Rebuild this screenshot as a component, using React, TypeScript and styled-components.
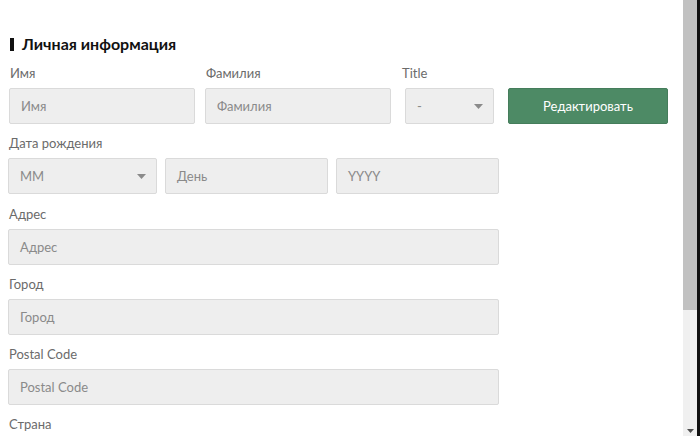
import React from "react";
import styled, { createGlobalStyle } from "styled-components";

const Global = createGlobalStyle`
  html, body { margin: 0; padding: 0; background: #fff; overflow: hidden; }
  body { font-family: Lato, "Open Sans", sans-serif; }
  * { box-sizing: border-box; }
`;

const Page = styled.div`
  display: flex;
  width: 700px;
  height: 436px;
  overflow: hidden;
`;

const Main = styled.div`
  flex: 1;
  padding: 35px 8px 0 8px;
  display: flex;
  flex-direction: column;
`;

const Heading = styled.h2`
  margin: 0 0 12px 2px;
  display: flex;
  align-items: center;
  gap: 8px;
  font-size: 16px;
  font-weight: 700;
  color: #111;
  line-height: 18px;
  &::before {
    content: "";
    width: 4px;
    height: 13px;
    background: #111;
  }
`;

const Row = styled.div`
  display: flex;
  align-items: flex-end;
  gap: ${(p: { $gap?: number }) => p.$gap ?? 8}px;
`;

const Field = styled.div<{ $w?: number; $ml?: number; $mb?: number }>`
  display: flex;
  flex-direction: column;
  width: ${(p) => (p.$w ? `${p.$w}px` : "auto")};
  margin-left: ${(p) => p.$ml ?? 0}px;
  margin-bottom: ${(p) => p.$mb ?? 11}px;
`;

const Label = styled.div`
  font-size: 13px;
  line-height: 16px;
  color: #6b6b6b;
  margin: 0 0 7px 1px;
  white-space: nowrap;
`;

const Box = styled.div<{ $w?: number }>`
  height: 36px;
  width: ${(p) => (p.$w ? `${p.$w}px` : "100%")};
  background: #eeeeee;
  border: 1px solid #dadada;
  border-radius: 2px;
  display: flex;
  align-items: center;
  justify-content: space-between;
  padding: 0 10px 0 11px;
  font-size: 13px;
  color: #8a8a8a;
`;

const Arrow = styled.svg`
  width: 9px;
  height: 5px;
  fill: #8a8a8a;
`;

const Button = styled.button`
  height: 36px;
  width: 160px;
  background: #4d8a65;
  border: 1px solid #457d5b;
  border-radius: 2px;
  color: #fff;
  font-family: inherit;
  font-size: 13px;
  margin-bottom: 11px;
  margin-left: 4px;
`;

const Scroll = styled.div`
  width: 14px;
  background: #f0f0f0;
  display: flex;
  flex-direction: column;
  justify-content: space-between;
  align-items: center;
  padding-bottom: 3px;
`;

const Thumb = styled.div`
  width: 14px;
  height: 310px;
  background: #c1c1c1;
`;

const Edge = styled.div`
  width: 3px;
  background: #111;
`;

const Caret = () => (
  <Arrow viewBox="0 0 9 5">
    <polygon points="0,0 9,0 4.5,5" />
  </Arrow>
);

export default function App() {
  return (
    <>
      <Global />
      <Page>
        <Main>
          <Heading>Личная информация</Heading>
          <Row $gap={10}>
            <Field $w={186} $ml={1}>
              <Label>Имя</Label>
              <Box>Имя</Box>
            </Field>
            <Field $w={186}>
              <Label>Фамилия</Label>
              <Box>Фамилия</Box>
            </Field>
            <Field $w={93}>
              <Label>Title</Label>
              <Box $w={89} style={{ marginLeft: 4 }}>
                - <Caret />
              </Box>
            </Field>
            <Button>Редактировать</Button>
          </Row>
          <Field $w={491} $mb={12}>
            <Label>Дата рождения</Label>
            <Row>
              <Box $w={149}>
                MM <Caret />
              </Box>
              <Box $w={163}>День</Box>
              <Box $w={163}>YYYY</Box>
            </Row>
          </Field>
          <Field $w={491}>
            <Label>Адрес</Label>
            <Box>Адрес</Box>
          </Field>
          <Field $w={491}>
            <Label>Город</Label>
            <Box>Город</Box>
          </Field>
          <Field $w={491}>
            <Label>Postal Code</Label>
            <Box>Postal Code</Box>
          </Field>
          <Field $w={491}>
            <Label>Страна</Label>
          </Field>
        </Main>
        <Scroll>
          <Thumb />
          <Arrow viewBox="0 0 9 5" style={{ fill: "#505050", width: 7, height: 4 }}>
            <polygon points="0,0 9,0 4.5,5" />
          </Arrow>
        </Scroll>
        <Edge />
      </Page>
    </>
  );
}
